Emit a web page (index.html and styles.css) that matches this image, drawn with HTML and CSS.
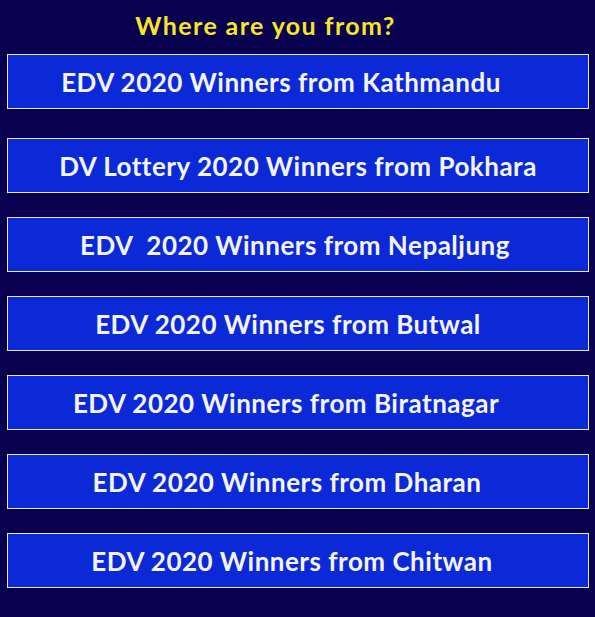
FILE: index.html
```html
<!DOCTYPE html>
<html lang="en">
<head>
    <meta charset="UTF-8">
    <title>Where are you from?</title>
    <link rel="stylesheet" href="styles.css">
</head>
<body>
  <h1 class="header">Where are you from?</h1>
  <ul class="cities">
    <li class="city first kathmandu">EDV 2020 Winners from Kathmandu</li>
    <li class="city">DV Lottery 2020 Winners from Pokhara</li>
    <li class="city nepaljung">EDV&nbsp; 2020 Winners from Nepaljung</li>
    <li class="city butwal">EDV 2020 Winners from Butwal</li>
    <li class="city biratnagar">EDV 2020 Winners from Biratnagar</li>
    <li class="city dharan">EDV 2020 Winners from Dharan</li>
    <li class="city chitwan">EDV 2020 Winners from Chitwan</li>
  </ul>
</body>
</html>
```

FILE: styles.css
```css
*{
  margin:0;
  padding:0;
  box-sizing:border-box;
}
body{
  background-color:#0a0050;
  font-family:Lato, "Open Sans", sans-serif;
  font-weight:bold;
}
.header{
  height:50px;
  line-height:50px;
  margin-bottom:4px;
  padding-right:64px;
  text-align:center;
  font-size:25px;
  letter-spacing:1.4px;
  color:#f5e62a;
}
.cities{
  list-style:none;
  display:flex;
  flex-direction:column;
  gap:24px;
  margin:0 6px 0 7px;
}
.city{
  height:55px;
  line-height:55px;
  border:1px solid #e6e8f4;
  background-color:#0b29d6;
  color:#f4f4ff;
  font-size:26px;
  letter-spacing:0.5px;
  text-align:center;
  white-space:nowrap;
}
.city.first{
  margin-bottom:5px;
}
/* the labels sit a little left of centre in the original */
.kathmandu{ padding-right:34px; }
.nepaljung{ padding-right:6px; }
.butwal{ padding-right:20px; }
.biratnagar{ padding-right:24px; }
.dharan{ padding-right:22px; }
.chitwan{ padding-right:12px; }
```
